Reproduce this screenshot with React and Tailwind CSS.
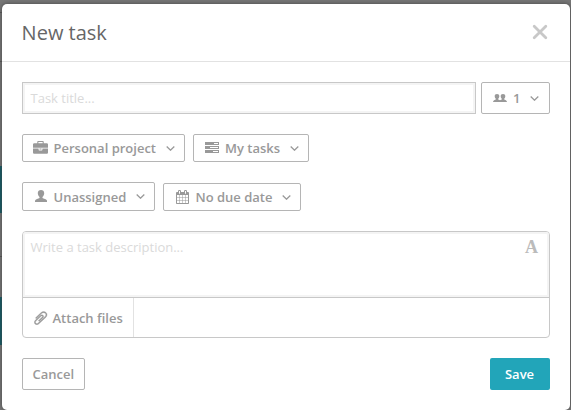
import React from "react";

const outlined =
  "flex items-center rounded-[2px] border border-[#b5b5b5] bg-white font-semibold text-[#999]";

function Chevron({ className = "" }) {
  return (
    <svg className={`shrink-0 ${className}`} width="9" height="5" viewBox="0 0 9 5" fill="none" stroke="currentColor" strokeWidth="1.3">
      <path d="M.7 .5 4.500 4.200 8.300 .5" />
    </svg>
  );
}

function Briefcase() {
  return (
    <svg className="mt-[1px] shrink-0" width="15" height="15" viewBox="0 0 1792 1792" fill="currentColor">
      <path d="M640 256h512v-128h-512v128zm1152 640v480q0 66-47 113t-113 47h-1472q-66 0-113-47t-47-113v-480h672v160q0 26 19 45t45 19h320q26 0 45-19t19-45v-160h672zm-768 0v128h-256v-128h256zm768-480v384h-1792v-384q0-66 47-113t113-47h352v-160q0-40 28-68t68-28h576q40 0 68 28t28 68v160h352q66 0 113 47t47 113z" />
    </svg>
  );
}

function Tasks() {
  return (
    <svg className="-mt-[1px] shrink-0" width="14" height="11" viewBox="0 0 14 11" fill="currentColor">
      <path fillRule="evenodd" d="M0 0h14v3H0zM9 1v1h4V1zM0 4h14v3H0zM5 5v1h8V5zM0 8h14v3H0zM8 9v1h5V9z" />
    </svg>
  );
}

function Calendar() {
  return (
    <svg className="-mt-[1px] shrink-0" width="13" height="14" viewBox="64 0 1664 1792" fill="currentColor">
      <path d="M192 1664h288v-288h-288v288zm352 0h320v-288h-320v288zm-352-352h288v-320h-288v320zm352 0h320v-320h-320v320zm-352-384h288v-288h-288v288zm736 736h320v-288h-320v288zm-384-736h320v-288h-320v288zm768 736h288v-288h-288v288zm-384-352h320v-320h-320v320zm-352-864v-288q0-13-9.5-22.5t-22.5-9.5h-64q-13 0-22.5 9.5t-9.5 22.5v288q0 13 9.5 22.5t22.5 9.5h64q13 0 22.5-9.5t9.5-22.5zm736 864h288v-320h-288v320zm-384-384h320v-288h-320v288zm384 0h288v-288h-288v288zm32-480v-288q0-13-9.5-22.5t-22.5-9.5h-64q-13 0-22.5 9.5t-9.5 22.5v288q0 13 9.5 22.5t22.5 9.5h64q13 0 22.5-9.5t9.5-22.5zm384-64v1280q0 52-38 90t-90 38h-1408q-52 0-90-38t-38-90v-1280q0-52 38-90t90-38h128v-96q0-66 47-113t113-47h64q66 0 113 47t47 113v96h384v-96q0-66 47-113t113-47h64q66 0 113 47t47 113v96h128q52 0 90 38t38 90z" />
    </svg>
  );
}

function User() {
  return (
    <svg className="-mt-[1px] shrink-0" width="12" height="12" viewBox="0 0 12 12" fill="currentColor">
      <path d="M6 0C7.900 0 9.200 1.200 9.200 3.100c0 1.700-.7 3.100-1.700 3.900v1.100c1 .7 4.200 1.100 4.500 2.600V12H0v-1.300C.3 9.200 3.500 8.800 4.500 8.100V7C3.500 6.200 2.800 4.800 2.800 3.100 2.800 1.200 4.100 0 6 0Z" />
    </svg>
  );
}

function People() {
  return (
    <svg className="shrink-0" width="14" height="8" viewBox="0 0 14 8" fill="currentColor">
      <path d="M4 0c1.500 0 2.300.8 2.300 2.200C6.300 3.400 5.800 4.200 5.200 4.700v.8l1.800.7 1.800-.7v-.8C8.200 4.200 7.700 3.400 7.700 2.200 7.700.8 8.500 0 10 0s2.300.8 2.300 2.200c0 1.200-.5 2-1.100 2.500v.8c.7.500 2.800.7 2.800 2.500H0c0-1.800 2.100-2 2.800-2.500v-.8C2.200 4.200 1.700 3.400 1.700 2.200 1.700.8 2.500 0 4 0Z" />
    </svg>
  );
}

function Paperclip() {
  return (
    <svg className="-scale-x-100 shrink-0" width="14" height="14" viewBox="90 60 1540 1640" preserveAspectRatio="none" fill="currentColor" stroke="currentColor" strokeWidth="40">
      <path d="M1596 1385q0 117-79 196t-196 79q-135 0-235-100l-777-776q-113-115-113-271 0-159 110-270t269-111q158 0 273 113l605 606q10 10 10 22 0 16-30.5 46.5t-46.5 30.500q-13 0-23-10l-606-607q-79-77-181-77-106 0-179 75t-73 181q0 105 76 181l776 777q63 63 145 63 64 0 106-42t42-106q0-82-63-145l-581-581q-26-24-60-24-29 0-48 19t-19 48q0 32 25 59l410 410q10 10 10 22 0 16-31 47t-47 31q-12 0-22-10l-410-410q-63-61-63-149 0-82 57-139t139-57q88 0 149 63l581 581q100 98 100 235z" />
    </svg>
  );
}

export default function App() {
  return (
    <div className="flex h-[410px] w-[571px] overflow-hidden bg-[#777] font-['Open_Sans',sans-serif] text-[13px] leading-[18px]">
      <div className="flex w-[2px] shrink-0 flex-col">
        <div className="h-[12px]" />
        <div className="h-[50px] border-y border-[#555]" />
        <div className="h-[104px]" />
        <div className="h-[47px] bg-[#0b5965]" />
        <div className="h-[43px]" />
        <div className="h-[41px] border-t border-[#555]" />
        <div className="h-[48px] bg-[#0b5965]" />
      </div>
      <main className="mt-[4px] flex h-[406px] w-[568px] shrink-0 flex-col rounded-[5px] bg-white shadow-[0_0_4px_#444]">
        <header className="flex h-[58px] shrink-0 items-center justify-between border-b border-[#e2e2e2] pr-[22px] pl-[19.600px]">
          <h1 className="text-[20px] leading-[28px] text-[#666]">New task</h1>
          <svg className="-mt-[2px]" width="16" height="16" viewBox="0 0 16 16" fill="none" stroke="#c8c8c8" strokeWidth="2.8" strokeLinecap="round">
            <path d="m2.200 2.200 11.600 11.600M13.800 2.200 2.200 13.800" />
          </svg>
        </header>

        <div className="mt-[20px] flex h-[32px] gap-[5px] px-[20px]">
          <div className="flex w-[454px] items-center border border-[#c8c8c8] pl-[7.5px] text-[#dadada] shadow-[inset_0_0_0_2px_#f4f4f4]">Task title...</div>
          <button className={`${outlined} w-[69px] pl-[11px]`}>
            <People />
            <span className="ml-[6px]">1</span>
            <Chevron className="ml-[10px]" />
          </button>
        </div>

        <div className="mt-[20px] flex h-[28px] gap-[8px] px-[20px]">
          <button className={`${outlined} w-[163px] pl-[10px]`}>
            <Briefcase />
            <span className="ml-[5.5px]">Personal project</span>
            <Chevron className="ml-[9.5px]" />
          </button>
          <button className={`${outlined} w-[116px] pl-[11px]`}>
            <Tasks />
            <span className="ml-[6px]">My tasks</span>
            <Chevron className="ml-[10px]" />
          </button>
        </div>

        <div className="mt-[20px] flex h-[29px] items-end gap-[8px] px-[20px]">
          <button className={`${outlined} h-[29px] w-[133px] pl-[11.5px]`}>
            <User />
            <span className="ml-[7px]">Unassigned</span>
            <Chevron className="-mt-[1px] ml-[9.5px]" />
          </button>
          <button className={`${outlined} h-[28px] w-[138px] pl-[12px]`}>
            <Calendar />
            <span className="ml-[6.5px]">No due date</span>
            <Chevron className="ml-[9.5px]" />
          </button>
        </div>

        <section className="mx-[20px] mt-[20px] flex h-[107px] flex-col rounded-[4px] border border-[#c8c8c8]">
          <div className="flex h-[66px] justify-between rounded-t-[3px] border-b border-[#c8c8c8] pt-[6px] pr-[11px] pl-[7.5px] text-[#dadada] shadow-[inset_0_0_0_2px_#f4f4f4]">
            <span>Write a task description...</span>
            <span className="font-['Liberation_Serif',serif] text-[18px] leading-[18px] font-bold text-[#bbb]">A</span>
          </div>
          <div className="flex h-[39px] w-[111px] items-center border-r border-[#e2e2e2] pl-[10.5px] font-semibold text-[#999]">
            <Paperclip />
            <span className="ml-[5px]">Attach files</span>
          </div>
        </section>

        <footer className="mt-[20px] flex h-[32px] justify-between px-[20px]">
          <button className={`${outlined} w-[63px] pl-[9.5px]`}>Cancel</button>
          <button className="w-[60px] rounded-[2px] bg-[#22a5b9] pr-[1px] font-semibold text-white">Save</button>
        </footer>
      </main>
    </div>
  );
}
